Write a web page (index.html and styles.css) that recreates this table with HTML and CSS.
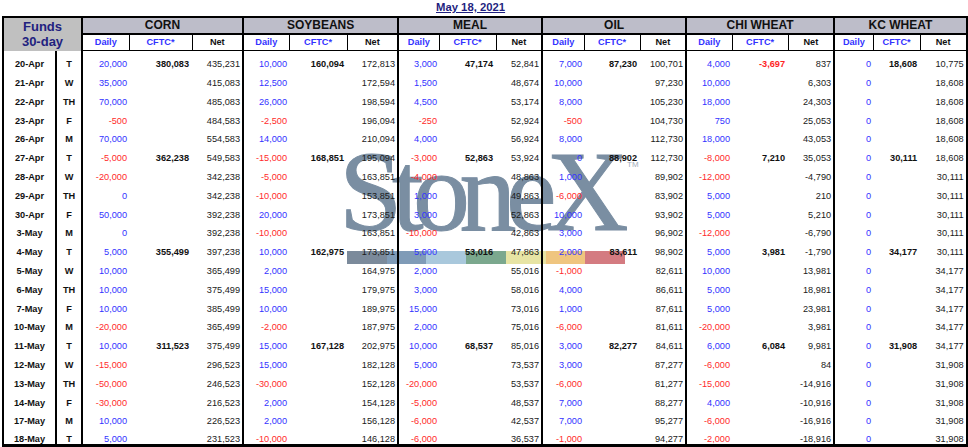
FILE: index.html
```html
<!DOCTYPE html>
<html>
<head>
<meta charset="utf-8">
<link rel="stylesheet" href="styles.css">
</head>
<body>
<div class="sheet">
  <div class="title"><span>May 18, 2021</span></div>
  <div class="logo">StoneX</div>
  <div class="tm">TM</div>
  <div class="bar"><i class="s1"></i><i class="s2"></i><i class="s3"></i><i class="s4"></i><i class="s5"></i><i class="s6"></i><i class="s7"></i></div>
  <table class="grid">
    <colgroup class="fx"><col class="w-date"></colgroup>
    <colgroup class="fx"><col class="w-day"></colgroup>
    <colgroup class="grp"><col class="w47"><col class="w63"><col class="w51"></colgroup>
    <colgroup class="grp"><col class="w46"><col class="w58"><col class="w51"></colgroup>
    <colgroup class="grp"><col class="w41"><col class="w57"><col class="w46"></colgroup>
    <colgroup class="grp"><col class="w42"><col class="w56"><col class="w46"></colgroup>
    <colgroup class="grp"><col class="w46"><col class="w56"><col class="w46"></colgroup>
    <colgroup class="grp"><col class="w39"><col class="w47"><col class="w47"></colgroup>
    <thead>
      <tr class="h1">
        <th class="funds" colspan="2" rowspan="2">Funds<br>30-day</th>
        <th class="gh" colspan="3">CORN</th>
        <th class="gh" colspan="3">SOYBEANS</th>
        <th class="gh" colspan="3">MEAL</th>
        <th class="gh" colspan="3">OIL</th>
        <th class="gh" colspan="3">CHI WHEAT</th>
        <th class="gh" colspan="3">KC WHEAT</th>
      </tr>
      <tr class="h2">
        <th class="bl">Daily</th><th class="bl">CFTC*</th><th>Net</th>
        <th class="bl">Daily</th><th class="bl">CFTC*</th><th>Net</th>
        <th class="bl">Daily</th><th class="bl">CFTC*</th><th>Net</th>
        <th class="bl">Daily</th><th class="bl">CFTC*</th><th>Net</th>
        <th class="bl">Daily</th><th class="bl">CFTC*</th><th>Net</th>
        <th class="bl">Daily</th><th class="bl">CFTC*</th><th>Net</th>
      </tr>
    </thead>
    <tbody>
      <tr><td class="dt">20-Apr</td><td class="dy">T</td><td class="u">20,000</td><td class="c">380,083</td><td>435,231</td><td class="u">10,000</td><td class="c">160,094</td><td>172,813</td><td class="u">3,000</td><td class="c">47,174</td><td>52,841</td><td class="u">7,000</td><td class="c">87,230</td><td>100,701</td><td class="u">4,000</td><td class="c neg">-3,697</td><td>837</td><td class="u">0</td><td class="c">18,608</td><td>10,775</td></tr>
      <tr><td class="dt">21-Apr</td><td class="dy">W</td><td class="u">35,000</td><td></td><td>415,083</td><td class="u">12,500</td><td></td><td>172,594</td><td class="u">1,500</td><td></td><td>48,674</td><td class="u">10,000</td><td></td><td>97,230</td><td class="u">10,000</td><td></td><td>6,303</td><td class="u">0</td><td></td><td>18,608</td></tr>
      <tr><td class="dt">22-Apr</td><td class="dy">TH</td><td class="u">70,000</td><td></td><td>485,083</td><td class="u">26,000</td><td></td><td>198,594</td><td class="u">4,500</td><td></td><td>53,174</td><td class="u">8,000</td><td></td><td>105,230</td><td class="u">18,000</td><td></td><td>24,303</td><td class="u">0</td><td></td><td>18,608</td></tr>
      <tr><td class="dt">23-Apr</td><td class="dy">F</td><td class="d">-500</td><td></td><td>484,583</td><td class="d">-2,500</td><td></td><td>196,094</td><td class="d">-250</td><td></td><td>52,924</td><td class="d">-500</td><td></td><td>104,730</td><td class="u">750</td><td></td><td>25,053</td><td class="u">0</td><td></td><td>18,608</td></tr>
      <tr><td class="dt">26-Apr</td><td class="dy">M</td><td class="u">70,000</td><td></td><td>554,583</td><td class="u">14,000</td><td></td><td>210,094</td><td class="u">4,000</td><td></td><td>56,924</td><td class="u">8,000</td><td></td><td>112,730</td><td class="u">18,000</td><td></td><td>43,053</td><td class="u">0</td><td></td><td>18,608</td></tr>
      <tr><td class="dt">27-Apr</td><td class="dy">T</td><td class="d">-5,000</td><td class="c">362,238</td><td>549,583</td><td class="d">-15,000</td><td class="c">168,851</td><td>195,094</td><td class="d">-3,000</td><td class="c">52,863</td><td>53,924</td><td class="u">0</td><td class="c">88,902</td><td>112,730</td><td class="d">-8,000</td><td class="c">7,210</td><td>35,053</td><td class="u">0</td><td class="c">30,111</td><td>18,608</td></tr>
      <tr><td class="dt">28-Apr</td><td class="dy">W</td><td class="d">-20,000</td><td></td><td>342,238</td><td class="d">-5,000</td><td></td><td>163,851</td><td class="d">-4,000</td><td></td><td>48,863</td><td class="u">1,000</td><td></td><td>89,902</td><td class="d">-12,000</td><td></td><td>-4,790</td><td class="u">0</td><td></td><td>30,111</td></tr>
      <tr><td class="dt">29-Apr</td><td class="dy">TH</td><td class="u">0</td><td></td><td>342,238</td><td class="d">-10,000</td><td></td><td>153,851</td><td class="u">1,000</td><td></td><td>49,863</td><td class="d">-6,000</td><td></td><td>83,902</td><td class="u">5,000</td><td></td><td>210</td><td class="u">0</td><td></td><td>30,111</td></tr>
      <tr><td class="dt">30-Apr</td><td class="dy">F</td><td class="u">50,000</td><td></td><td>392,238</td><td class="u">20,000</td><td></td><td>173,851</td><td class="u">3,000</td><td></td><td>52,863</td><td class="u">10,000</td><td></td><td>93,902</td><td class="u">5,000</td><td></td><td>5,210</td><td class="u">0</td><td></td><td>30,111</td></tr>
      <tr><td class="dt">3-May</td><td class="dy">M</td><td class="u">0</td><td></td><td>392,238</td><td class="d">-10,000</td><td></td><td>163,851</td><td class="d">-10,000</td><td></td><td>42,863</td><td class="u">3,000</td><td></td><td>96,902</td><td class="d">-12,000</td><td></td><td>-6,790</td><td class="u">0</td><td></td><td>30,111</td></tr>
      <tr><td class="dt">4-May</td><td class="dy">T</td><td class="u">5,000</td><td class="c">355,499</td><td>397,238</td><td class="u">10,000</td><td class="c">162,975</td><td>173,851</td><td class="u">5,000</td><td class="c">53,016</td><td>47,863</td><td class="u">2,000</td><td class="c">83,611</td><td>98,902</td><td class="u">5,000</td><td class="c">3,981</td><td>-1,790</td><td class="u">0</td><td class="c">34,177</td><td>30,111</td></tr>
      <tr><td class="dt">5-May</td><td class="dy">W</td><td class="u">10,000</td><td></td><td>365,499</td><td class="u">2,000</td><td></td><td>164,975</td><td class="u">2,000</td><td></td><td>55,016</td><td class="d">-1,000</td><td></td><td>82,611</td><td class="u">10,000</td><td></td><td>13,981</td><td class="u">0</td><td></td><td>34,177</td></tr>
      <tr><td class="dt">6-May</td><td class="dy">TH</td><td class="u">10,000</td><td></td><td>375,499</td><td class="u">15,000</td><td></td><td>179,975</td><td class="u">3,000</td><td></td><td>58,016</td><td class="u">4,000</td><td></td><td>86,611</td><td class="u">5,000</td><td></td><td>18,981</td><td class="u">0</td><td></td><td>34,177</td></tr>
      <tr><td class="dt">7-May</td><td class="dy">F</td><td class="u">10,000</td><td></td><td>385,499</td><td class="u">10,000</td><td></td><td>189,975</td><td class="u">15,000</td><td></td><td>73,016</td><td class="u">1,000</td><td></td><td>87,611</td><td class="u">5,000</td><td></td><td>23,981</td><td class="u">0</td><td></td><td>34,177</td></tr>
      <tr><td class="dt">10-May</td><td class="dy">M</td><td class="d">-20,000</td><td></td><td>365,499</td><td class="d">-2,000</td><td></td><td>187,975</td><td class="u">2,000</td><td></td><td>75,016</td><td class="d">-6,000</td><td></td><td>81,611</td><td class="d">-20,000</td><td></td><td>3,981</td><td class="u">0</td><td></td><td>34,177</td></tr>
      <tr><td class="dt">11-May</td><td class="dy">T</td><td class="u">10,000</td><td class="c">311,523</td><td>375,499</td><td class="u">15,000</td><td class="c">167,128</td><td>202,975</td><td class="u">10,000</td><td class="c">68,537</td><td>85,016</td><td class="u">3,000</td><td class="c">82,277</td><td>84,611</td><td class="u">6,000</td><td class="c">6,084</td><td>9,981</td><td class="u">0</td><td class="c">31,908</td><td>34,177</td></tr>
      <tr><td class="dt">12-May</td><td class="dy">W</td><td class="d">-15,000</td><td></td><td>296,523</td><td class="u">15,000</td><td></td><td>182,128</td><td class="u">5,000</td><td></td><td>73,537</td><td class="u">3,000</td><td></td><td>87,277</td><td class="d">-6,000</td><td></td><td>84</td><td class="u">0</td><td></td><td>31,908</td></tr>
      <tr><td class="dt">13-May</td><td class="dy">TH</td><td class="d">-50,000</td><td></td><td>246,523</td><td class="d">-30,000</td><td></td><td>152,128</td><td class="d">-20,000</td><td></td><td>53,537</td><td class="d">-6,000</td><td></td><td>81,277</td><td class="d">-15,000</td><td></td><td>-14,916</td><td class="u">0</td><td></td><td>31,908</td></tr>
      <tr><td class="dt">14-May</td><td class="dy">F</td><td class="d">-30,000</td><td></td><td>216,523</td><td class="u">2,000</td><td></td><td>154,128</td><td class="d">-5,000</td><td></td><td>48,537</td><td class="u">7,000</td><td></td><td>88,277</td><td class="u">4,000</td><td></td><td>-10,916</td><td class="u">0</td><td></td><td>31,908</td></tr>
      <tr><td class="dt">17-May</td><td class="dy">M</td><td class="u">10,000</td><td></td><td>226,523</td><td class="u">2,000</td><td></td><td>156,128</td><td class="d">-6,000</td><td></td><td>42,537</td><td class="u">7,000</td><td></td><td>95,277</td><td class="d">-6,000</td><td></td><td>-16,916</td><td class="u">0</td><td></td><td>31,908</td></tr>
      <tr><td class="dt">18-May</td><td class="dy">T</td><td class="u">5,000</td><td></td><td>231,523</td><td class="d">-10,000</td><td></td><td>146,128</td><td class="d">-6,000</td><td></td><td>36,537</td><td class="d">-1,000</td><td></td><td>94,277</td><td class="d">-2,000</td><td></td><td>-18,916</td><td class="u">0</td><td></td><td>31,908</td></tr>
    </tbody>
  </table>
</div>
</body>
</html>
```
FILE: styles.css
```css
* { box-sizing: border-box; }
html, body { margin: 0; padding: 0; background: #fff; }
body { font-family: "Liberation Sans", Arial, sans-serif; color: #1a1a1a; }

.sheet { position: relative; width: 968px; height: 447px; overflow: hidden; }

.title {
  height: 16px;
  padding: 1px 0 0 436px;
  font-size: 11.3px;
  line-height: 12px;
  font-weight: bold;
  color: #1f1f80;
}
.title span { text-decoration: underline; text-underline-offset: 1px; }

/* watermark (drawn beneath the grid) */
.logo {
  position: absolute;
  left: 339px;
  top: 135px;
  z-index: 0;
  font-family: "Liberation Serif", "Times New Roman", serif;
  font-size: 114px;
  line-height: 113px;
  letter-spacing: -10.5px;
  color: #7a8ea2;
  -webkit-text-stroke: 1px #7a8ea2;
  white-space: nowrap;
}
.tm {
  position: absolute;
  left: 627px;
  top: 160px;
  z-index: 0;
  font-size: 8px;
  line-height: 10px;
  color: #9fadbc;
}
.bar {
  position: absolute;
  left: 347px;
  top: 251px;
  width: 278px;
  height: 13px;
  z-index: 0;
  display: flex;
}
.bar i { flex: 1; }
.bar .s1 { background: #7b8a9b; }
.bar .s2 { background: #7f9bb7; }
.bar .s3 { background: #a9c8dc; }
.bar .s4 { background: #7ba88e; }
.bar .s5 { background: #e7e4a4; }
.bar .s6 { background: #efc57f; }
.bar .s7 { background: #d47b81; }

/* grid */
.grid {
  position: relative;
  z-index: 1;
  margin-left: 2px;
  width: 964px;
  table-layout: fixed;
  border-collapse: collapse;
  border: 2px solid #000;
  border-right-width: 3px;
  border-bottom-width: 3px;
  background: transparent;
}
.fx, .grp { border-right: 2px solid #000; }
.w-date { width: 53px; }
.w-day { width: 26px; }
.w39 { width: 39px; }
.w41 { width: 41px; }
.w42 { width: 42px; }
.w46 { width: 46px; }
.w47 { width: 47px; }
.w51 { width: 51px; }
.w56 { width: 56px; }
.w57 { width: 57px; }
.w58 { width: 58px; }
.w63 { width: 63px; }

.grid th, .grid td { padding: 0; overflow: visible; white-space: nowrap; }

.h1 { height: 17px; }
.h2 { height: 16.5px; }

.funds {
  background: #c0c0c0;
  color: #22227f;
  font-size: 13px;
  line-height: 15px;
  font-weight: bold;
  text-align: center;
  vertical-align: middle;
  border-right: 2px solid #000;
}
.gh {
  background: #bdbdc9;
  font-size: 12px;
  font-weight: bold;
  color: #111;
  text-align: center;
  vertical-align: middle;
  line-height: 13px;
  border-bottom: 2px solid #000;
  border-left: 2px solid #000;
}
.h2 th {
  font-size: 9.2px;
  line-height: 11px;
  font-weight: bold;
  color: #111;
  text-align: center;
  vertical-align: bottom;
  padding-bottom: 2px;
  border-bottom: 1px solid #000;
}
.h2 th.bl { color: #3333ff; border-right: 1px solid #000; }

.grid tbody tr { height: 18.8px; }
.grid td {
  font-size: 9.2px;
  line-height: 10px;
  text-align: right;
  vertical-align: bottom;
  padding-right: 2px;
  color: #1a1a1a;
}
.grid td.dt, .grid td.dy {
  font-weight: bold;
  text-align: center;
  padding-right: 0;
  color: #111;
}
.grid td.u { color: #3333ff; }
.grid td.d { color: #ff2b2b; }
.grid td.c { font-weight: bold; color: #111; padding-right: 3px; }
.grid td.c.neg { color: #ff1f1f; }
```
